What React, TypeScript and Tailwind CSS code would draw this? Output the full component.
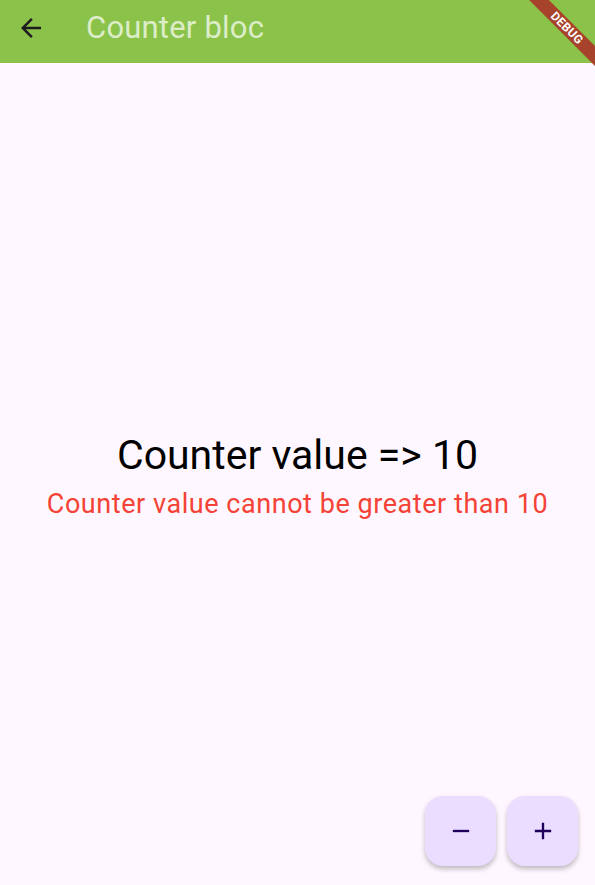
import React from "react";

export default function App() {
  return (
    <div className="relative w-[595px] h-[885px] bg-[#FEF7FF] overflow-hidden flex flex-col" style={{ fontFamily: "Roboto, sans-serif" }}>
      <div className="h-[63px] bg-[#8BC34A] shrink-0">
        <div className="h-[55px] flex items-center">
          <div className="w-[62px] flex justify-center">
            <svg width="30" height="30" viewBox="0 0 24 24">
              <path d="M20 11H7.83l5.59-5.59L12 4l-8 8 8 8 1.41-1.41L7.83 13H20v-2z" fill="#1d1b20" />
            </svg>
          </div>
          <div className="ml-[24px] text-[31px] text-[#DCEDC8] leading-none tracking-[0.2px]">Counter bloc</div>
        </div>
      </div>
      <div className="flex-1 flex flex-col items-center justify-center pt-[2px]">
        <div className="text-[41px] text-black leading-[48px]">Counter value =&gt; 10</div>
        <div className="text-[27px] text-[#F44336] leading-[32px] mt-[9px] tracking-[0.55px]">Counter value cannot be greater than 10</div>
      </div>
      <div className="absolute right-[17px] bottom-[19px] flex gap-[11px]">
        <button className="w-[71px] h-[70px] rounded-[18px] bg-[#EADDFF] flex items-center justify-center shadow-[0_3px_5px_rgba(0,0,0,0.25)]">
          <svg width="28" height="28" viewBox="0 0 24 24"><path d="M19 13H5v-2h14v2z" fill="#21005D" /></svg>
        </button>
        <button className="w-[71px] h-[70px] rounded-[18px] bg-[#EADDFF] flex items-center justify-center shadow-[0_3px_5px_rgba(0,0,0,0.25)]">
          <svg width="28" height="28" viewBox="0 0 24 24"><path d="M19 13h-6v6h-2v-6H5v-2h6V5h2v6h6v2z" fill="#21005D" /></svg>
        </button>
      </div>
      <div className="absolute top-[21px] right-[-22px] w-[100px] h-[14px] bg-[#A8432B] rotate-45 flex items-center justify-center">
        <span className="text-[12px] font-bold text-white leading-none tracking-[0.3px]" style={{ fontFamily: "Roboto, sans-serif" }}>DEBUG</span>
      </div>
    </div>
  );
}
